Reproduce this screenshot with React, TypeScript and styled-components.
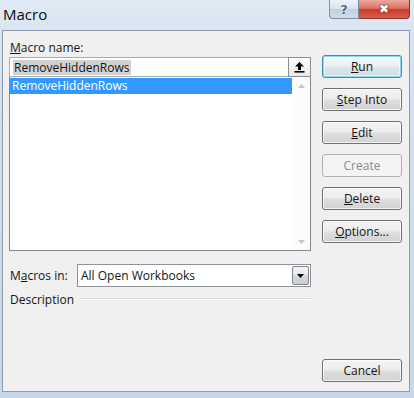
import React from 'react';
import styled, { createGlobalStyle, css } from 'styled-components';

const GlobalStyle = createGlobalStyle`
  html, body { margin: 0; padding: 0; background: #ffffff; }
  * { box-sizing: border-box; }
`;

const Window = styled.div`
  width: 414px;
  height: 398px;
  display: flex;
  flex-direction: column;
  padding: 0 4px 6px 2px;
  background: linear-gradient(180deg, #e2ebf5 0%, #d6e3f0 10%, #cddcec 60%, #c6d7ea 100%);
  font-family: "Open Sans", "Noto Sans", sans-serif;
  color: #000;
`;

const TitleBar = styled.div`
  height: 30px;
  display: flex;
  justify-content: space-between;
  align-items: flex-start;
`;

const Title = styled.div`
  font-size: 15px;
  line-height: 28px;
  padding-left: 1px;
  color: #0b0b0b;
`;

const CaptionButtons = styled.div`
  display: flex;
  height: 19px;
`;

const CaptionButton = styled.div<{ $kind: 'help' | 'close' }>`
  height: 19px;
  display: flex;
  align-items: center;
  justify-content: center;
  font-family: "DejaVu Sans", sans-serif;
  font-weight: bold;
  border: 1px solid;
  border-top: none;
  ${({ $kind }) =>
    $kind === 'help'
      ? css`
          width: 30px;
          border-color: #7d8ea5;
          border-radius: 0 0 0 4px;
          background: linear-gradient(180deg, #eef3f9 0%, #d9e3ee 48%, #c2d0e0 52%, #cfdbe8 100%);
          color: #55687f;
          font-size: 13px;
          text-shadow: 0 0 2px #fff, 0 0 1px #fff;
        `
      : css`
          width: 51px;
          border-color: #8c3328;
          border-left: none;
          border-radius: 0 0 4px 0;
          background: linear-gradient(180deg, #eaa99c 0%, #dc7566 45%, #c83a2b 55%, #d4604f 100%);
          color: #ffffff;
          font-size: 12px;
          text-shadow: 0 0 2px #7b1d12, 0 0 1px #7b1d12;
        `}
`;

const Client = styled.div`
  flex: 1;
  border: 1px solid #8e9bad;
  background: #f0f0f0;
  display: grid;
  grid-template-columns: 302px 80px;
  column-gap: 11px;
  padding: 7px 0 9px 6px;
  font-size: 12px;
`;

const LeftCol = styled.div`
  display: flex;
  flex-direction: column;
`;

const FieldLabel = styled.div`
  line-height: 19px;
  padding-left: 1px;
  color: #151515;
`;

const InputRow = styled.div`
  height: 20px;
  display: flex;
`;

const TextField = styled.div`
  flex: 1;
  border: 1px solid #a7acb3;
  border-right: none;
  background: #fff;
  display: flex;
  align-items: center;
  padding-left: 3px;
`;

const SelectedText = styled.span`
  background: #d1d1d1;
  line-height: 15px;
  padding: 0 1px;
  color: #151515;
`;

const CollapseButton = styled.div`
  width: 23px;
  border: 1px solid #8a8f96;
  background: linear-gradient(180deg, #ffffff 0%, #f4f4f4 50%, #e8e8e8 100%);
  display: flex;
  align-items: center;
  justify-content: center;
`;

const ListBox = styled.div`
  height: 174px;
  border: 1px solid #828790;
  border-top: none;
  background: #fff;
  display: flex;
`;

const ListItems = styled.div`
  flex: 1;
  padding-top: 1px;
`;

const ListRow = styled.div<{ $selected?: boolean }>`
  height: 16px;
  line-height: 16px;
  padding-left: 2px;
  ${({ $selected }) =>
    $selected &&
    css`
      background: #3399ff;
      color: #fff;
    `}
`;

const ScrollBar = styled.div`
  width: 18px;
  display: flex;
  flex-direction: column;
  justify-content: space-between;
  background: #fbfbfb;
`;

const ScrollArrow = styled.div`
  height: 17px;
  display: flex;
  align-items: center;
  justify-content: center;
`;

const MacrosInRow = styled.div`
  margin-top: 13px;
  height: 23px;
  display: flex;
  align-items: center;
`;

const InlineLabel = styled.div<{ $auto?: boolean }>`
  width: ${({ $auto }) => ($auto ? 'auto' : '68px')};
  padding-left: 1px;
  color: #151515;
`;

const Select = styled.div`
  flex: 1;
  height: 23px;
  border: 1px solid #8e939a;
  background: #fff;
  display: flex;
  align-items: stretch;
`;

const SelectValue = styled.div`
  flex: 1;
  padding-left: 3px;
  line-height: 21px;
  color: #151515;
`;

const DropButton = styled.div`
  width: 17px;
  margin: 1px;
  border: 1px solid #7f858c;
  border-radius: 2px;
  background: linear-gradient(180deg, #f3f3f3 0%, #e9e9e9 50%, #d9d9d9 50%, #cdcdcd 100%);
  display: flex;
  align-items: center;
  justify-content: center;
`;

const DescriptionRow = styled.div`
  margin-top: 3px;
  height: 18px;
  display: flex;
  align-items: center;
  gap: 6px;
`;

const EtchedLine = styled.div`
  flex: 1;
  height: 2px;
  border-top: 1px solid #d5dfe5;
  border-bottom: 1px solid #ffffff;
`;

const RightCol = styled.div`
  display: flex;
  flex-direction: column;
  gap: 10px;
  padding-top: 17px;
`;

const Button = styled.div<{ $variant?: 'default' | 'disabled' | 'normal'; $bottom?: boolean }>`
  height: 23px;
  width: 80px;
  border: 1px solid #707070;
  border-radius: 3px;
  background: linear-gradient(180deg, #f4f4f4 0%, #ececec 48%, #dedede 52%, #d2d2d2 100%);
  box-shadow: inset 0 0 0 1px rgba(255, 255, 255, 0.75);
  display: flex;
  align-items: center;
  justify-content: center;
  color: #151515;
  ${({ $variant }) =>
    $variant === 'default' &&
    css`
      border-color: #3c8fb8;
      box-shadow: inset 0 0 0 1px #8ad8f3, inset 0 0 0 2px rgba(255, 255, 255, 0.5);
      background: linear-gradient(180deg, #f3f8fa 0%, #eaf1f4 48%, #dde6ea 52%, #d3dde1 100%);
    `}
  ${({ $variant }) =>
    $variant === 'disabled' &&
    css`
      border-color: #adb2b5;
      background: #f4f4f4;
      box-shadow: none;
      color: #8a8a8a;
    `}
  ${({ $bottom }) =>
    $bottom &&
    css`
      margin-top: auto;
    `}
`;

const UpArrowIcon = () => (
  <svg width="11" height="12" viewBox="0 0 11 12">
    <path d="M5.5 1 L10 5.5 L7 5.5 L7 9 L4 9 L4 5.5 L1 5.5 Z" fill="#000" />
    <rect x="0.5" y="10" width="10" height="1.6" fill="#000" />
  </svg>
);

const Triangle = ({ dir, color }: { dir: 'up' | 'down'; color: string }) => (
  <svg width="7" height="4" viewBox="0 0 7 4">
    {dir === 'up' ? (
      <path d="M0 4 L3.5 0 L7 4 Z" fill={color} />
    ) : (
      <path d="M0 0 L7 0 L3.5 4 Z" fill={color} />
    )}
  </svg>
);

export default function App() {
  return (
    <>
      <GlobalStyle />
      <Window>
        <TitleBar>
          <Title>Macro</Title>
          <CaptionButtons>
            <CaptionButton $kind="help">?</CaptionButton>
            <CaptionButton $kind="close">✖</CaptionButton>
          </CaptionButtons>
        </TitleBar>
        <Client>
          <LeftCol>
            <FieldLabel>
              <u>M</u>acro name:
            </FieldLabel>
            <InputRow>
              <TextField>
                <SelectedText>RemoveHiddenRows</SelectedText>
              </TextField>
              <CollapseButton>
                <UpArrowIcon />
              </CollapseButton>
            </InputRow>
            <ListBox>
              <ListItems>
                <ListRow $selected>RemoveHiddenRows</ListRow>
              </ListItems>
              <ScrollBar>
                <ScrollArrow>
                  <Triangle dir="up" color="#c4c4c4" />
                </ScrollArrow>
                <ScrollArrow>
                  <Triangle dir="down" color="#c4c4c4" />
                </ScrollArrow>
              </ScrollBar>
            </ListBox>
            <MacrosInRow>
              <InlineLabel>
                M<u>a</u>cros in:
              </InlineLabel>
              <Select>
                <SelectValue>All Open Workbooks</SelectValue>
                <DropButton>
                  <Triangle dir="down" color="#000" />
                </DropButton>
              </Select>
            </MacrosInRow>
            <DescriptionRow>
              <InlineLabel $auto>Description</InlineLabel>
              <EtchedLine />
            </DescriptionRow>
          </LeftCol>
          <RightCol>
            <Button $variant="default">
              <span>
                <u>R</u>un
              </span>
            </Button>
            <Button>
              <span>
                <u>S</u>tep Into
              </span>
            </Button>
            <Button>
              <span>
                <u>E</u>dit
              </span>
            </Button>
            <Button $variant="disabled">Create</Button>
            <Button>
              <span>
                <u>D</u>elete
              </span>
            </Button>
            <Button>
              <span>
                <u>O</u>ptions...
              </span>
            </Button>
            <Button $bottom>Cancel</Button>
          </RightCol>
        </Client>
      </Window>
    </>
  );
}
